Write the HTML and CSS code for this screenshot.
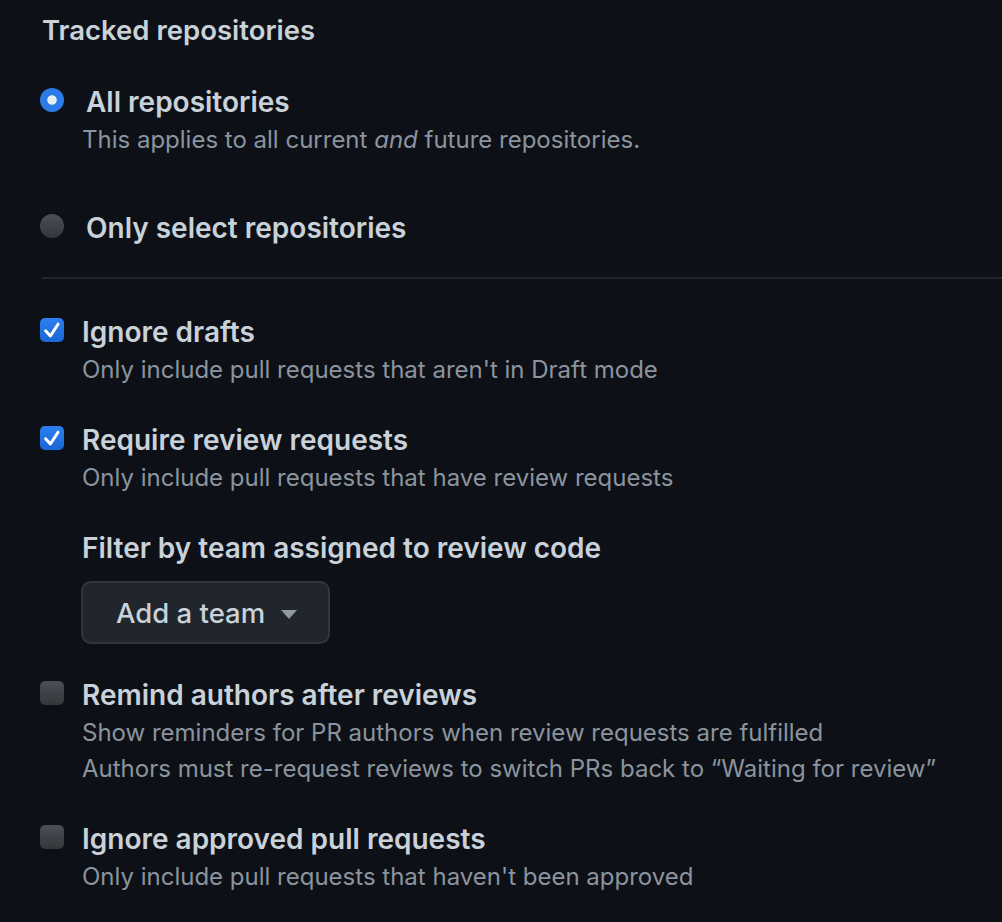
FILE: index.html
```html
<!DOCTYPE html>
<html>
<head>
<meta charset="utf-8">
<link rel="stylesheet" href="styles.css">
</head>
<body>
<div class="page">
  <h2 class="title">Tracked repositories</h2>

  <div class="radio-row first">
    <span class="radio checked"></span>
    <div class="text">
      <div class="label">All repositories</div>
      <div class="note">This applies to all current <em>and</em> future repositories.</div>
    </div>
  </div>

  <div class="radio-row second">
    <span class="radio"></span>
    <div class="text">
      <div class="label">Only select repositories</div>
    </div>
  </div>

  <hr class="divider">

  <div class="check-row">
    <span class="check checked"><svg viewBox="0 0 24 24" width="24" height="24"><path d="M5.6 12.8l4.8 5.2L18 6.2" fill="none" stroke="#fff" stroke-width="3" stroke-linecap="round" stroke-linejoin="round"/></svg></span>
    <div class="text">
      <div class="label">Ignore drafts</div>
      <div class="note">Only include pull requests that aren't in Draft mode</div>
    </div>
  </div>

  <div class="check-row">
    <span class="check checked"><svg viewBox="0 0 24 24" width="24" height="24"><path d="M5.6 12.8l4.8 5.2L18 6.2" fill="none" stroke="#fff" stroke-width="3" stroke-linecap="round" stroke-linejoin="round"/></svg></span>
    <div class="text">
      <div class="label">Require review requests</div>
      <div class="note">Only include pull requests that have review requests</div>
      <div class="filter">
        <div class="label">Filter by team assigned to review code</div>
        <button class="btn">Add a team <span class="caret"></span></button>
      </div>
    </div>
  </div>

  <div class="check-row">
    <span class="check"></span>
    <div class="text">
      <div class="label">Remind authors after reviews</div>
      <div class="note">Show reminders for PR authors when review requests are fulfilled</div>
      <div class="note">Authors must re-request reviews to switch PRs back to “Waiting for review”</div>
    </div>
  </div>

  <div class="check-row">
    <span class="check"></span>
    <div class="text">
      <div class="label">Ignore approved pull requests</div>
      <div class="note">Only include pull requests that haven't been approved</div>
    </div>
  </div>
</div>
</body>
</html>
```

FILE: styles.css
```css
html, body {
  margin: 0;
  padding: 0;
  background: #0d1117;
}
body {
  font-family: Inter, "Noto Sans", sans-serif;
  color: #c9d1d9;
}
.page {
  padding: 12px 0 0 40px;
}
.title {
  margin: 0 0 0 2px;
  font-size: 27.5px;
  font-weight: 600;
  line-height: 36px;
}
.radio-row {
  display: flex;
  align-items: flex-start;
  gap: 22px;
}
.radio-row.first {
  margin-top: 36px;
}
.radio-row.second {
  margin-top: 52px;
}
.radio {
  width: 24px;
  height: 24px;
  border-radius: 50%;
  background: linear-gradient(#4b4e54, #33363b);
  flex: none;
  margin-top: 4px;
}
.radio.checked {
  background: radial-gradient(circle, #e3edfc 4.3px, #2a7be6 5.2px);
}
.label {
  font-size: 28px;
  font-weight: 600;
  line-height: 36px;
}
.note {
  font-size: 24px;
  line-height: 36px;
  color: #8b949e;
  margin-top: 2px;
}
.radio-row .note {
  margin-left: -4px;
}
.note + .note {
  margin-top: 0;
}
.note em {
  font-style: italic;
}
.divider {
  border: 0;
  height: 2px;
  background: #21262d;
  margin: 31px 0 0 2px;
}
.check-row {
  display: flex;
  align-items: flex-start;
  gap: 18px;
  margin-top: 34px;
}
.divider + .check-row {
  margin-top: 35px;
}
.check {
  width: 24px;
  height: 24px;
  margin-top: 4px;
  border-radius: 5px;
  background: linear-gradient(#4b4e54, #33363b);
  flex: none;
  display: flex;
}
.check.checked {
  background: linear-gradient(#2b7ff0, #1c66d6);
}
.filter {
  margin-top: 34px;
}
.btn {
  margin: 15px 0 -1px -1px;
  height: 63px;
  width: 249px;
  box-sizing: border-box;
  background: #21262d;
  border: 2px solid #30363d;
  border-radius: 10px;
  color: #c9d1d9;
  font-family: inherit;
  font-size: 27.5px;
  font-weight: 500;
  padding: 0 0 0 33px;
  display: flex;
  align-items: center;
  gap: 16px;
}
.caret {
  width: 0;
  height: 0;
  border-left: 8px solid transparent;
  border-right: 8px solid transparent;
  border-top: 9px solid #9198a1;
  margin-top: 3px;
}
```
